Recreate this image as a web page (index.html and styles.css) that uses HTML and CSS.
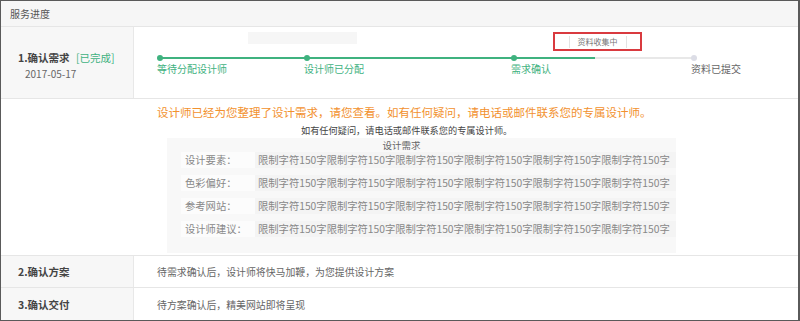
FILE: index.html
```html
<!DOCTYPE html>
<html lang="zh-CN">
<head>
    <meta charset="UTF-8">
    <title>服务进度</title>
    <link rel="stylesheet" href="styles.css">
</head>
<body>
<div class="panel">
    <div class="panel-head">服务进度</div>

    <div class="row row-first">
        <div class="row-label">
            <div class="row-title">1.确认需求 <span class="done">[已完成]</span></div>
            <div class="row-date">2017-05-17</div>
        </div>
        <div class="row-body">
            <div class="step-top">
                <div class="faint"></div>
                <div class="tip"><span>资料收集中</span></div>
            </div>
            <div class="track">
                <div class="step on" style="width:147px">等待分配设计师</div>
                <div class="step on" style="width:207px">设计师已分配</div>
                <div class="step on" style="width:180px">需求确认</div>
                <div class="step">资料已提交</div>
            </div>
        </div>
    </div>

    <div class="detail">
        <p class="notice">设计师已经为您整理了设计需求，请您查看。如有任何疑问，请电话或邮件联系您的专属设计师。</p>
        <p class="sub">如有任何疑问，请电话或邮件联系您的专属设计师。</p>
        <div class="need">
            <div class="need-title">设计需求</div>
            <div class="need-row"><span class="need-key">设计要素：</span><span class="need-val">限制字符150字限制字符150字限制字符150字限制字符150字限制字符150字限制字符150字</span></div>
            <div class="need-row"><span class="need-key">色彩偏好：</span><span class="need-val">限制字符150字限制字符150字限制字符150字限制字符150字限制字符150字限制字符150字</span></div>
            <div class="need-row"><span class="need-key">参考网站：</span><span class="need-val">限制字符150字限制字符150字限制字符150字限制字符150字限制字符150字限制字符150字</span></div>
            <div class="need-row"><span class="need-key">设计师建议：</span><span class="need-val">限制字符150字限制字符150字限制字符150字限制字符150字限制字符150字限制字符150字</span></div>
        </div>
    </div>

    <div class="row row-small">
        <div class="row-label"><div class="row-title">2.确认方案</div></div>
        <div class="row-body row-text">待需求确认后，设计师将快马加鞭，为您提供设计方案</div>
    </div>
    <div class="row row-small row-last">
        <div class="row-label"><div class="row-title">3.确认交付</div></div>
        <div class="row-body row-text">待方案确认后，精美网站即将呈现</div>
    </div>
</div>
</body>
</html>
```

FILE: styles.css
```css
* {
    box-sizing: border-box;
}

body {
    margin: 0;
    background: #fff;
    font-family: "Noto Sans CJK SC", "Liberation Sans", sans-serif;
    color: #555;
}

.panel {
    width: 800px;
    height: 321px;
    border: 1px solid #5a5a5a;
    border-right-width: 2px;
    overflow: hidden;
    background: #fff;
}

.panel-head {
    height: 26px;
    line-height: 25px;
    padding-left: 9px;
    font-size: 10px;
    color: #555;
    background: #f6f6f6;
    border-bottom: 1px solid #e6e6e6;
}

.row {
    display: flex;
    border-bottom: 1px solid #e6e6e6;
}

.row-first {
    height: 72px;
}

.row-small {
    height: 32px;
}

.row-last {
    border-bottom: 0;
    height: 33px;
}

.row-label {
    width: 133px;
    flex-shrink: 0;
    background: #f7f7f7;
    border-right: 1px solid #e8e8e8;
    padding-left: 17px;
}

.row-first .row-label {
    padding-top: 23px;
}

.row-small .row-label {
    display: flex;
    align-items: center;
}

.row-title {
    font-size: 10.5px;
    line-height: 16px;
    font-weight: bold;
    color: #444;
}

.done {
    font-weight: normal;
    color: #3fb27f;
    margin-left: 4px;
}

.row-date {
    font-size: 10px;
    line-height: 16px;
    color: #666;
    padding-left: 7px;
}

.row-body {
    flex: 1;
}

.row-text {
    display: flex;
    align-items: center;
    padding-left: 23px;
    font-size: 9.9px;
    color: #666;
}

.step-top {
    display: flex;
    align-items: flex-start;
    height: 24px;
    padding-top: 5px;
}

.faint {
    width: 109px;
    height: 12px;
    margin-left: 114px;
    background: #f6f6f6;
}

.tip {
    margin-left: 196px;
    width: 89px;
    height: 19px;
    border: 2px solid #d93a3f;
    display: flex;
    align-items: center;
    justify-content: center;
}

.tip span {
    display: block;
    padding: 0 8px;
    line-height: 12px;
    font-size: 8px;
    color: #777;
    border-left: 1px solid #e3e3e3;
    border-right: 1px solid #e3e3e3;
}

.track {
    position: relative;
    display: flex;
    margin-left: 23px;
    margin-top: 4px;
    background: linear-gradient(to right, #3fb27f 435px, #e8e8e8 435px) no-repeat;
    background-size: 537px 2px;
    background-position: 3px 2px;
}

.step {
    position: relative;
    flex-shrink: 0;
    padding-top: 7px;
    font-size: 10px;
    line-height: 14px;
    color: #666;
}

.step.on {
    color: #3fb27f;
}

.step::before {
    content: "";
    position: absolute;
    left: 0;
    top: 0;
    width: 6px;
    height: 6px;
    border-radius: 50%;
    background: #dcdde6;
}

.step.on::before {
    background: #3fb27f;
}

.detail {
    height: 157px;
    border-bottom: 1px solid #e6e6e6;
    padding-top: 5px;
}

.notice {
    margin: 0 0 0 156px;
    font-size: 11.5px;
    line-height: 16px;
    color: #f2912e;
}

.sub {
    margin: 2px 0 0 300px;
    font-size: 9.2px;
    line-height: 16px;
    color: #444;
}

.need {
    width: 509px;
    margin-left: 166px;
    padding-bottom: 9px;
    background: #f8f8f8;
}

.need-title {
    font-size: 9.5px;
    line-height: 14px;
    text-align: center;
    padding-right: 40px;
    color: #666;
}

.need-row {
    display: flex;
    margin-bottom: 7px;
    font-size: 10.3px;
    line-height: 16px;
    color: #888;
}

.need-key {
    width: 74px;
    margin-left: 14px;
    padding-left: 4px;
    background: #fcfcfc;
}

.need-val {
    flex: 1;
    padding-left: 3px;
    background: #f4f4f4;
    white-space: nowrap;
}
```
